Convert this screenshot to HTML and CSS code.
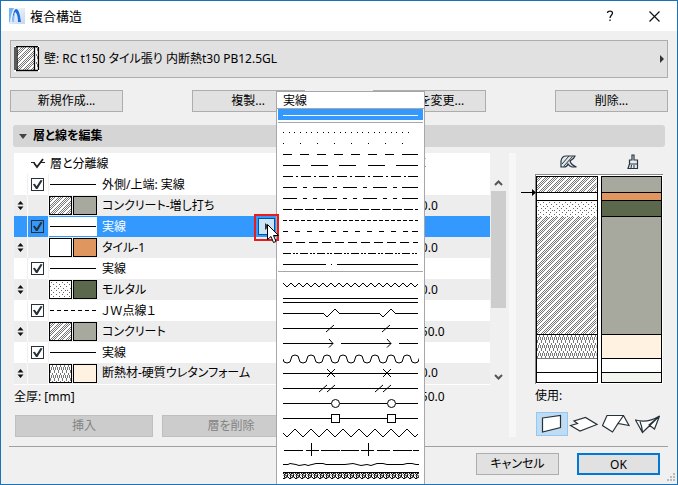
FILE: index.html
```html
<!DOCTYPE html>
<html lang="ja">
<head>
<meta charset="utf-8">
<title>複合構造</title>
<link rel="stylesheet" href="styles.css">
</head>
<body>
<svg class="defs" aria-hidden="true">
  <defs>
    <pattern id="concrete" width="8" height="8" patternUnits="userSpaceOnUse">
      <path shape-rendering="crispEdges" stroke="#777" d="M0 .5h1m1 0h1m1 0h1M1 1.5h1m1 0h1m3 0h1M0 2.5h1m1 0h1m3 0h1M1 3.5h1m3 0h1m1 0h1M0 4.5h1m3 0h1m1 0h1M3 5.5h1m1 0h1m1 0h1M2 6.5h1m1 0h1m1 0h1M1 7.5h1m1 0h1m1 0h1"/>
    </pattern>
    <pattern id="mortar" width="16" height="12" patternUnits="userSpaceOnUse">
      <path shape-rendering="crispEdges" stroke="#666" d="M1 1.5h1m4 0h1m5 0h1M3 3.5h1m5 0h1m4 0h1M0 5.5h1m5 0h1m3 0h1M4 7.5h1m3 0h1m4 0h1M1 9.5h1m4 0h1m4 0h1m3 0h1M3 11.5h1m5 0h1m3 0h1"/>
    </pattern>
    <pattern id="insulation" width="4" height="8" patternUnits="userSpaceOnUse">
      <path shape-rendering="crispEdges" stroke="#777" d="M.5 5v3M1.500 2v3M2.500 0v2M3.500 2v3"/>
    </pattern>
    <symbol id="move" viewBox="0 0 7 9"><path d="M3.500 0L6.500 3.500H.5zM3.500 9L.5 5.500h6z" fill="#111"/></symbol>
    <symbol id="solid" viewBox="0 0 48 19"><path d="M1 9.500h46" stroke="#000" shape-rendering="crispEdges"/></symbol>
    <symbol id="dashed" viewBox="0 0 48 19"><path d="M1 9.500h46" stroke="#000" stroke-dasharray="4 3" shape-rendering="crispEdges"/></symbol>
  </defs>
</svg>
<div class="dialog">
  <header class="titlebar">
    <svg class="logo" viewBox="0 0 16 16"><defs><linearGradient id="lg" x2="1" y2="1"><stop stop-color="#fff"/><stop offset="1" stop-color="#c5d6f0"/></linearGradient></defs><path d="M0 0h16v16H0z" fill="url(#lg)"/><path d="M0 0h5Q2 5 1 14H0z" fill="#76b5f3"/><path d="M3 14C4 6 5 1 7 1c3 0 4 6 5 13H9C9 9 8 5 6 4z" fill="#1b6ee0"/><path d="M6 4Q4 8 3 14h2z" fill="#8fc0f5"/></svg>
    <h1>複合構造</h1>
    <button class="caption" aria-label="ヘルプ"><svg width="8" height="12" viewBox="0 0 8 12"><path d="M1.500 3C1.500 .5 6.500 .5 6.500 3c0 2-2.500 2.500-2.500 5M4 9.500v1.500" fill="none" stroke="#111" stroke-width="1.300"/></svg></button>
    <button class="caption" aria-label="閉じる"><svg width="11" height="11" viewBox="0 0 11 11"><path d="M.5.5l10 10m0-10l-10 10" stroke="#111" stroke-width="1.200"/></svg></button>
  </header>

  <main class="content">
    <button class="picker">
      <svg width="26" height="26" viewBox="0 0 26 26"><path d="M0 0h26v26H0z" fill="#fff"/><path d="M3 1h17v23H3z" fill="url(#concrete)"/><path d="M22 1h2v23h-2z" fill="url(#insulation)"/><path d="M2 .5h22M2 24.500h22M1 1v23M3 1v23M20.500 1v23M24.500 1v23" stroke="#000" stroke-width="1.300"/></svg>
      <span>壁: RC t150 タイル張り 内断熱t30 PB12.5GL</span>
      <svg class="picker-arrow" width="4" height="8" viewBox="0 0 4 8"><path d="M0 0l4 4-4 4z" fill="#333"/></svg>
    </button>

    <div class="actions">
      <button>新規作成...</button>
      <button>複製...</button>
      <button>名前を変更...</button>
      <button>削除...</button>
    </div>

    <h2 class="section"><svg width="8" height="5" viewBox="0 0 8 5"><path d="M0 0h8L4 5z" fill="#444"/></svg>層と線を編集</h2>

    <div class="editor">
      <section class="layers">
        <div class="list">
          <table>
            <colgroup><col class="c-move"><col class="c-check"><col class="c-swatch"><col><col class="c-size"></colgroup>
            <thead>
              <tr><th></th><th><svg width="14" height="11" viewBox="0 0 14 11"><path d="M0 4.500h4m6 0h4" stroke="#222"/><path d="M3 5l3 4 6-8" fill="none" stroke="#222" stroke-width="1.800"/></svg></th><th colspan="2" class="name-head">層と分離線</th><th>厚</th></tr>
            </thead>
            <tbody>
              <tr><td></td><td><input type="checkbox" id="l1" checked></td><td><svg class="line"><use href="#solid"/></svg></td><td><label for="l1">外側/上端: 実線</label></td><td></td></tr>
              <tr class="layer"><td><svg class="move"><use href="#move"/></svg></td><td></td><td><span class="pair"><svg class="fill"><rect width="100%" height="100%" fill="url(#concrete)"/></svg><i class="surface grey"></i></span></td><td>コンクリート-増し打ち</td><td>20.0</td></tr>
              <tr class="selected"><td></td><td><input type="checkbox" id="l2" checked></td><td><svg class="line"><use href="#solid"/></svg></td><td><div class="with-button"><label for="l2">実線</label><button class="popup" aria-label="線種"><svg width="4" height="7" viewBox="0 0 4 7"><path d="M0 0l4 3.500L0 7z" fill="#333"/></svg></button></div></td><td></td></tr>
              <tr class="layer"><td><svg class="move"><use href="#move"/></svg></td><td></td><td><span class="pair"><svg class="fill"></svg><i class="surface orange"></i></span></td><td>タイル-1</td><td>10.0</td></tr>
              <tr><td></td><td><input type="checkbox" id="l3" checked></td><td><svg class="line"><use href="#solid"/></svg></td><td><label for="l3">実線</label></td><td></td></tr>
              <tr class="layer"><td><svg class="move"><use href="#move"/></svg></td><td></td><td><span class="pair"><svg class="fill"><rect width="100%" height="100%" fill="url(#mortar)"/></svg><i class="surface green"></i></span></td><td>モルタル</td><td>20.0</td></tr>
              <tr><td></td><td><input type="checkbox" id="l4" checked></td><td><svg class="line"><use href="#dashed"/></svg></td><td><label for="l4">ＪＷ点線１</label></td><td></td></tr>
              <tr class="layer"><td><svg class="move"><use href="#move"/></svg></td><td></td><td><span class="pair"><svg class="fill"><rect width="100%" height="100%" fill="url(#concrete)"/></svg><i class="surface grey"></i></span></td><td>コンクリート</td><td>150.0</td></tr>
              <tr><td></td><td><input type="checkbox" id="l5" checked></td><td><svg class="line"><use href="#solid"/></svg></td><td><label for="l5">実線</label></td><td></td></tr>
              <tr class="layer"><td><svg class="move"><use href="#move"/></svg></td><td></td><td><span class="pair"><svg class="fill"><rect width="100%" height="100%" fill="url(#insulation)"/></svg><i class="surface cream"></i></span></td><td>断熱材-硬質ウレタンフォーム</td><td>30.0</td></tr>
            </tbody>
          </table>
          <div class="scrollbar">
            <svg width="9" height="6" viewBox="0 0 9 6"><path d="M1 5l3.500-3.500L8 5" fill="none" stroke="#555" stroke-width="2"/></svg>
            <div class="track"><div class="thumb"></div></div>
            <svg width="9" height="6" viewBox="0 0 9 6"><path d="M1 1l3.500 3.500L8 1" fill="none" stroke="#555" stroke-width="2"/></svg>
          </div>
        </div>
        <div class="total"><span>全厚: [mm]</span><span class="total-value">250.0</span></div>
        <div class="edit-buttons"><button disabled>挿入</button><button disabled>層を削除</button></div>
      </section>

      <div class="splitter"></div>

      <section class="preview">
        <div class="preview-heads">
          <svg width="18" height="13" viewBox="0 0 18 13"><path d="M1 12V6Q2 1 6 1h9q-1 3-5 5 1 4 6.500 6H12q-3-1-4-3-1 3-4 3z" fill="#e4e8ea" stroke="#263640" stroke-width="1.200"/><path d="M2 9l7-8M3.500 11.500L12.500 1.500" stroke="#263640"/></svg>
          <svg width="12" height="16" viewBox="0 0 12 16"><path d="M5 6V1h2v5h3.500v4h-8V6zM2.500 10L1 14.500h9.500V10" fill="#e8ecef" stroke="#263640" stroke-width="1.200"/><path d="M4.500 11L4 14m3-3v3" stroke="#263640"/></svg>
        </div>
        <div class="columns">
          <svg class="pointer" width="15" height="7" viewBox="0 0 15 7"><path d="M0 3.500h12" stroke="#000"/><path d="M11 0l4 3.500L11 7z"/></svg>
          <div class="column">
            <div class="band h16"><svg><rect width="100%" height="100%" fill="url(#concrete)"/></svg></div>
            <div class="band h8"></div>
            <div class="band h16 open"><svg><rect width="100%" height="100%" fill="url(#mortar)"/></svg></div>
            <div class="band h118"><svg><rect width="100%" height="100%" fill="url(#concrete)"/></svg></div>
            <div class="band h24 soft"><svg><rect width="100%" height="100%" fill="url(#insulation)"/></svg></div>
            <div class="band h14"></div>
            <div class="band h10"></div>
          </div>
          <div class="column">
            <div class="band h16 grey"></div>
            <div class="band h8 orange"></div>
            <div class="band h16 green"></div>
            <div class="band h118 grey"></div>
            <div class="band h24 cream"></div>
            <div class="band h14"></div>
            <div class="band h10 pale"></div>
          </div>
        </div>
        <div class="usage-label">使用:</div>
        <div class="usage">
          <button class="on" aria-label="壁"><svg viewBox="0 0 32 24"><path d="M6.500 6L24.500 3.500v12L6.500 20z"/></svg></button>
          <button aria-label="スラブ"><svg viewBox="0 0 32 24"><path d="M1.500 13.500l7-2L5 9l11.500-3.500L28 12.500 11 19z"/></svg></button>
          <button aria-label="屋根"><svg viewBox="0 0 32 24"><path d="M.5 13.500L5 3.500h16.500L27 13.500l-11-2-5.500 8.500zM21.500 3.500l-5.500 8"/></svg></button>
          <button aria-label="シェル"><svg viewBox="0 0 32 24"><path d="M.5 8l7 12.500L24.500 4q-12 7.500-24 4zM5 9.500q2 5 2.500 11M24.500 4L14 13l5.500 4z"/></svg></button>
        </div>
      </section>
    </div>

    <footer class="footer">
      <button>キャンセル</button>
      <button class="default">OK</button>
    </footer>
  </main>
  <svg class="grip" width="9" height="9" viewBox="0 0 9 9"><path d="M6 0h2v2H6zM3 3h2v2H3zM6 3h2v2H6zM0 6h2v2H0zM3 6h2v2H3zM6 6h2v2H6z" fill="#bbb"/></svg>

  <div class="menu" role="menu">
    <div class="menu-title">実線</div>
    <button class="current" aria-label="実線"><svg viewBox="0 0 136 11"><path d="M0 6.500h135"/></svg></button>
    <div class="group basic">
      <button><svg viewBox="0 0 136 11"><path d="M0 5.500h1m5 0h1m4 0h1m5 0h1m5 0h1m4 0h1m5 0h1m5 0h1m4 0h1m5 0h1m5 0h1m4 0h1m5 0h1m5 0h1m4 0h1m5 0h1m5 0h1m4 0h1m5 0h1m5 0h1m4 0h1m5 0h1m5 0h1"/></svg></button>
      <button><svg viewBox="0 0 136 11"><path d="M0 5.500h121" stroke-dasharray="1 16"/></svg></button>
      <button><svg viewBox="0 0 136 11"><path d="M0 5.500h119" stroke-dasharray="9 8"/><path d="M119 5.500h16"/></svg></button>
      <button><svg viewBox="0 0 136 11"><path d="M0 5.500h17m11 0h17m11 0h17m12 0h17m11 0h22"/></svg></button>
      <button><svg viewBox="0 0 136 11"><path d="M0 5.500h125" stroke-dasharray="10 3 2 3"/><path d="M125 5.500h10"/></svg></button>
      <button><svg viewBox="0 0 136 11"><path d="M0 5.500h119" stroke-dasharray="14 6 4 6"/><path d="M119 5.500h16"/></svg></button>
      <button><svg viewBox="0 0 136 11"><path d="M0 5.500h119" stroke-dasharray="14 6 4 6 4 6"/><path d="M119 5.500h16"/></svg></button>
      <button><svg viewBox="0 0 136 11"><path d="M0 5.500h135" stroke-dasharray="9 2"/></svg></button>
      <button><svg viewBox="0 0 136 11"><path d="M0 5.500h135" stroke-dasharray="4 2"/></svg></button>
      <button><svg viewBox="0 0 136 11"><path d="M0 5.500h135" stroke-dasharray="5 7"/><path d="M129 5.500h6"/></svg></button>
      <button><svg viewBox="0 0 136 11"><path d="M0 5.500h135" stroke-dasharray="9 4"/></svg></button>
      <button><svg viewBox="0 0 136 11"><path d="M0 5.500h135" stroke-dasharray="8 2 2 1 2 2"/></svg></button>
      <button><svg viewBox="0 0 136 11"><path d="M0 5.500h43m5 0h1m5 0h81"/></svg></button>
    </div>
    <div class="group symbols">
      <button><svg viewBox="0 0 136 15"><path class="slant" d="M0 7l4 4 4-4 4 4 4-4 4 4 4-4 4 4 4-4 4 4 4-4 4 4 4-4 4 4 4-4 4 4 4-4 4 4 4-4 4 4 4-4 4 4 4-4 4 4 4-4 4 4 4-4 4 4 4-4 4 4 4-4 4 4 4-4 4 4 3-3"/></svg></button>
      <button><svg viewBox="0 0 136 15"><path d="M0 7.500h135M0 11.500h135"/></svg></button>
      <button><svg viewBox="0 0 136 15"><path d="M0 7.500h41m15 0h41m15 0h23"/><path class="slant" d="M40 7l4 4 8-8 4 4M96 7l4 4 8-8 4 4"/></svg></button>
      <button><svg viewBox="0 0 136 15"><path d="M0 7.500h135"/><path class="slant" d="M43 11l8-7M99 11l8-7"/></svg></button>
      <button><svg viewBox="0 0 136 15"><path d="M0 7.500h50m8 0h50m8 0h19"/><path class="slant" d="M46 3l4 4.500-4 4M104 3l4 4.500-4 4"/></svg></button>
      <button><svg viewBox="0 0 136 15"><path class="slant" d="M0 8q0 4 4 4 4 0 4-4t4-4 4 4 4 4 4-4 4-4 4 4 4 4 4-4 4-4 4 4 4 4 4-4 4-4 4 4 4 4 4-4 4-4 4 4 4 4 4-4 4-4 4 4 4 4 4-4 4-4 4 4 4 4 4-4 4-4 4 4 4 4 4-4 4-4 4 4 4 4"/></svg></button>
      <button><svg viewBox="0 0 136 15"><path d="M0 7.500h135"/><path class="slant" d="M44 3l8 8m0-8l-8 8M100 3l8 8m0-8l-8 8"/></svg></button>
      <button><svg viewBox="0 0 136 15"><path d="M0 7.500h135"/><path class="slant" d="M36 11l8-7m0 7l8-7M92 11l8-7m0 7l8-7"/></svg></button>
      <button><svg viewBox="0 0 136 15"><path d="M0 7.500h48m9 0h47m9 0h22"/><g class="slant"><circle cx="52.500" cy="7.500" r="4"/><circle cx="108.500" cy="7.500" r="4"/></g></svg></button>
      <button><svg viewBox="0 0 136 15"><path d="M0 7.500h48m9 0h47m9 0h22M48.500 3.500h8v8h-8zM104.500 3.500h8v8h-8z"/></svg></button>
      <button><svg viewBox="0 0 136 15"><path class="slant" d="M0 7l4 4 8-8 8 8 8-8 8 8 8-8 8 8 8-8 8 8 8-8 8 8 8-8 8 8 8-8 8 8 8-8 8 8 3-3"/></svg></button>
      <button><svg viewBox="0 0 136 15"><path d="M1 9.500h19m3 0h13m2 0h19m1 0h18m2 0h13m3 0h13m3 0h19m1 0h17M28.500 2v14M85.500 2v14"/></svg></button>
      <button><svg viewBox="0 0 136 15"><path class="slant" d="M0 8.500h5l2-1 6 1 3 1 6-1 3 1 8-2h7l3 1h19l8-1 8 2 6-1 4 1 6-2h6l4 1h16l4-1h5l4 1h3"/></svg></button>
      <button><svg viewBox="0 0 136 15"><defs><pattern id="weave" width="6" height="7" patternUnits="userSpaceOnUse" y="1"><path class="slant" d="M0 .5h6M3 1L1 3l1 3 2-1 1-3-2-1M0 1l6 5M0 6.500h2"/></pattern></defs><rect y="1" width="136" height="7" fill="url(#weave)" stroke="none"/></svg></button>
    </div>
  </div>

  <div class="callout"></div>
  <svg class="cursor" width="12" height="19" viewBox="0 0 12 19"><path d="M.5.5v15l3.500-3 2.500 6 2.500-1-2.500-6h5z" fill="#fff" stroke="#000"/></svg>
</div>
</body>
</html>
```

FILE: styles.css
```css
* { box-sizing: border-box; }

body {
  margin: 0;
  background: #f0f0f0;
  color: #000;
  font: 12px/20px "Noto Sans", "Noto Sans CJK JP", sans-serif;
  font-feature-settings: "palt";
}

button {
  font: inherit;
  font-feature-settings: inherit;
  color: inherit;
  padding: 0;
  background: #e1e1e1;
  border: 1px solid #adadad;
}

svg { display: block; flex: none; }
.defs { position: absolute; width: 0; height: 0; }

.dialog {
  position: relative;
  min-height: 100vh;
  border: 1px solid #1a72b8;
  overflow: hidden;
}

.titlebar {
  display: flex;
  align-items: center;
  height: 30px;
  padding: 0 16px 0 8px;
  background: #fff;
}
.logo { width: 16px; height: 16px; }
.titlebar h1 { flex: 1; margin: 0 0 0 5px; font-size: 13px; font-weight: 400; }
.caption {
  display: grid;
  place-items: center;
  width: 13px;
  height: 20px;
  margin-left: 32px;
  background: none;
  border: 0;
}

.content { padding: 9px 9px 0; }

.picker {
  display: flex;
  align-items: center;
  gap: 4px;
  width: 100%;
  height: 38px;
  padding: 0 3px;
  text-align: left;
}
.picker-arrow { margin-left: auto; }

.actions { display: flex; justify-content: space-between; margin-top: 12px; }
.actions button { width: 113px; height: 22px; }

.section {
  display: flex;
  align-items: center;
  gap: 6px;
  height: 22px;
  margin: 13px 3px 6px;
  padding-left: 6px;
  border-radius: 3px;
  background: #d5d5d5;
  font-size: 12px;
  font-weight: 700;
}

.editor { display: flex; margin-left: 4px; }
.layers { flex: 1; }
.list { display: flex; }

table {
  flex: 1;
  table-layout: fixed;
  border-collapse: collapse;
  width: 100%;
  background: #fff;
  border-bottom: 1px solid #fff;
}
.c-move { width: 13px; }
.c-check { width: 21px; }
.c-swatch { width: 54px; }
.c-size { width: 76px; }
th, td { height: 21px; padding: 0; text-align: left; font-weight: 400; white-space: nowrap; line-height: 20px; }
th:nth-child(2) svg, .move, input { margin: 0 auto; }
.name-head { padding-left: 2px; }
tbody td:nth-child(-n+2) { border-right: 1px solid #f0f0f0; }
.layer { background: #ededed; }
.layer td:nth-child(-n+2) { border-right-color: #fafafa; }
.selected { background: #3399ff; color: #fff; }
.move { width: 7px; height: 9px; }
.line { width: 48px; height: 19px; background: #fff; }
.pair { display: flex; gap: 1px; }
.fill, .surface { width: 23px; height: 19px; border: 1px solid #000; background: #fff; }
.surface { width: 24px; }

.grey, .surface.grey { background: #a7a89e; }
.orange, .surface.orange { background: #e0965f; }
.green, .surface.green { background: #5b684c; }
.cream, .surface.cream { background: #fff2e0; }
.pale { background: #f2f5ed; }

input {
  appearance: none;
  display: block;
  width: 13px;
  height: 13px;
  border: 1px solid #263238;
}
input:checked::after {
  content: "";
  display: block;
  height: 11px;
  background: #263238;
  clip-path: polygon(8% 48%, 26% 44%, 42% 66%, 78% 10%, 96% 14%, 50% 92%, 36% 92%);
}

.with-button { display: flex; justify-content: space-between; padding-right: 139px; }
.popup {
  display: grid;
  place-items: center;
  width: 17px;
  height: 17px;
  margin: 1px 0;
  background: #cce4f7;
  border-color: #00549b;
}

.scrollbar {
  display: flex;
  flex-direction: column;
  align-items: center;
  width: 15px;
  margin: 27px 3px 5px 1px;
}
.track { flex: 1; width: 15px; padding: 5px 0; }
.thumb { height: 66%; background: #cdcdcd; }

.total { display: flex; justify-content: space-between; line-height: 24px; }
.total-value { width: 95px; }
.edit-buttons { display: flex; gap: 9px; margin: 6px 0 0 1px; }
.edit-buttons button { width: 138px; height: 22px; background: #ccc; border-color: #bfbfbf; color: #838383; }

.splitter { width: 7px; background: #f7f7f7; }

.preview { width: 152px; padding-left: 19px; }
.preview-heads { display: flex; justify-content: space-around; height: 21px; padding: 0 0 4px; align-items: center; }
.preview-heads, .columns { width: 128px; }
.columns {
  position: relative;
  display: flex;
  gap: 3px;
  padding: 1px 1px 1px 0;
  background: #fff;
  border: solid #888;
  border-width: 1px 0 0 1px;
}
.column { flex: 1; border: 1px solid #000; border-bottom: 0; }
.band { border-bottom: 1px solid #000; }
.band svg { width: 100%; height: 100%; }
.open { border-bottom: 0; }
.soft { border-bottom-color: #777; }
.h8 { height: 8px; }
.h10 { height: 10px; }
.h14 { height: 14px; }
.h16 { height: 16px; }
.h24 { height: 24px; }
.h118 { height: 118px; }
.pointer { position: absolute; right: 100%; top: 14px; }

.usage-label { line-height: 24px; }
.usage { display: flex; gap: 1px; margin: 4px -4px 0 1px; }
.usage button { width: 32px; height: 24px; background: none; border: 0; }
.usage svg { width: 32px; height: 24px; fill: #fff; stroke: #263238; stroke-width: 1.2; }
.usage .on { background: #c0dcf3; outline: 1px solid #90c8f6; outline-offset: -1px; }

.footer {
  display: flex;
  justify-content: flex-end;
  gap: 18px;
  margin: 9px 0 0 -1px;
  padding: 6px 8px 9px;
  border-top: 1px solid #a0a0a0;
}
.footer button { width: 83px; height: 22px; }
.footer .default { border: 2px solid #0078d7; }
.grip { position: absolute; right: 1px; bottom: 2px; }

.menu {
  position: absolute;
  top: 90px;
  bottom: -1px;
  left: 275px;
  width: 149px;
  overflow: hidden;
  background: #fff;
  border: 1px solid #a6a6ab;
  border-bottom: 0;
}
.menu-title { height: 17px; padding-left: 6px; border-bottom: 1px solid #a6a6ab; line-height: 18px; }
.menu button { display: block; width: 100%; padding-left: 6px; background: none; border: 0; }
.menu svg { width: 136px; height: 11px; fill: none; stroke: #000; shape-rendering: crispEdges; }
.menu .slant { fill: none; stroke: #000; shape-rendering: auto; }
.menu .current { width: 145px; margin: 0 1px 2px; padding-left: 5px; background: #3399ff; }
.menu .current svg { stroke: #fff; }
.group { margin: 0 1px; padding-top: 4px; border-top: 1px solid #a6a6ab; }
.menu .group button { padding-left: 5px; }
.basic { padding-bottom: 1px; }
.menu .symbols svg { height: 15px; }

.callout {
  position: absolute;
  top: 213px;
  left: 253px;
  width: 25px;
  height: 27px;
  border: 2px solid #e81c1c;
}
.cursor { position: absolute; top: 223px; left: 266px; }
```
